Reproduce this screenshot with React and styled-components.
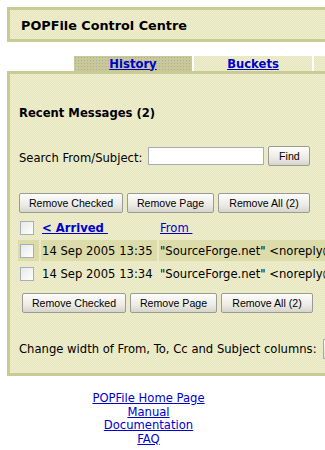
import React from 'react';
import styled, { createGlobalStyle } from 'styled-components';

const GlobalStyle = createGlobalStyle`
html, body {
  margin: 0;
  overflow: hidden;
  background: #ffffff;
}
body {
  padding: 7px;
  font-family: "DejaVu Sans", Verdana, sans-serif;
  font-size: 11.6px;
  color: #000;
}
`;

const paper = `
background-color: #eaeac6;
background-image: repeating-conic-gradient(#e6e6c0 0 25%, #eeeecd 0 50%);
background-size: 2px 2px;
`;

const Page = styled.div`
width: 640px;
`;

const Header = styled.div`
${paper}
border: 3px solid #c9cb95;
border-right: none;
height: 29px;
display: flex;
align-items: center;
padding-left: 11px;
`;

const Title = styled.h1`
margin: 0;
font-size: 12.8px;
font-weight: bold;
padding-top: 1px;
`;

const TabRow = styled.div`
display: flex;
gap: 2px;
margin-top: 14px;
padding-left: 67px;
height: 15px;
`;

const Tab = styled.div`
width: 118px;
height: 15px;
display: flex;
align-items: center;
justify-content: center;
${p => p.$active ? `
background-color: #c9c997;
background-image: radial-gradient(#a9a9b0 0.6px, transparent 0.9px);
background-size: 3px 3px;
` : paper}
a {
  color: #0000cc;
  font-weight: bold;
  font-size: 11.6px;
}
`;

const Panel = styled.div`
${paper}
border: 3px solid #c9cb95;
border-right: none;
height: 299px;
padding: 0 0 0 9px;
`;

const Heading = styled.h2`
margin: 0;
padding-top: 33px;
font-size: 11.6px;
font-weight: bold;
line-height: 13px;
`;

const SearchRow = styled.div`
display: flex;
align-items: center;
margin-top: 27px;
height: 18px;
`;

const SearchLabel = styled.span`
margin-right: 6px;
padding-top: 4px;
`;

const SearchInput = styled.input`
box-sizing: border-box;
width: 116px;
height: 18px;
border: 1px solid #a5acb2;
background: #fff;
margin: 0 4px 0 0;
padding: 0;
`;

const ButtonRow = styled.div`
display: flex;
gap: 4px;
margin-top: ${p => p.$top}px;
margin-left: ${p => p.$left || 0}px;
`;

const Btn = styled.button`
box-sizing: border-box;
height: 20px;
width: ${p => p.$w}px;
padding: 0;
font-family: "Liberation Sans", Tahoma, sans-serif;
font-size: 10.6px;
color: #000;
border: 1px solid #9b9b96;
border-radius: 2px;
background: linear-gradient(#fdfdfb, #ecebe6 60%, #d6d5cc);
`;

const Table = styled.div`
margin-top: 4px;
margin-left: -1px;
display: grid;
grid-template-columns: 21px 116px auto;
column-gap: 2px;
row-gap: 2px;
`;

const Cell = styled.div`
height: ${p => p.$h || 21}px;
display: flex;
align-items: center;
white-space: nowrap;
background: ${p => p.$shade ? '#dcdcab' : 'transparent'};
padding-left: ${p => p.$pad || 0}px;
a {
  color: #0000cc;
  font-weight: ${p => p.$bold ? 'bold' : 'normal'};
}
`;

const Check = styled.span`
display: inline-block;
box-sizing: border-box;
width: 14px;
height: 14px;
margin-left: 2px;
border: 1px solid #a7adbb;
background: linear-gradient(135deg, #e8e8e3, #fff);
`;

const WidthRow = styled.div`
display: flex;
align-items: center;
margin-top: 26px;
white-space: nowrap;
`;

const WidthBox = styled.span`
display: inline-block;
width: 20px;
height: 18px;
margin-left: 6px;
border: 1px solid #a5acb2;
background: linear-gradient(#fdfdfb, #d9d8d0);
`;

const Footer = styled.div`
width: 283px;
margin-top: 16px;
text-align: center;
line-height: 13.5px;
a {
  display: block;
  color: #0000cc;
  width: fit-content;
  margin: 0 auto;
}
`;

const rows = [
  { date: '14 Sep 2005 13:35', from: '"SourceForge.net" <noreply@sourceforge.net>', shade: true },
  { date: '14 Sep 2005 13:34', from: '"SourceForge.net" <noreply@sourceforge.net>', shade: false },
];

const Buttons = ({ top, left }) => (
  <ButtonRow $top={top} $left={left}>
    <Btn $w={104}>Remove Checked</Btn>
    <Btn $w={87}>Remove Page</Btn>
    <Btn $w={92}>Remove All (2)</Btn>
  </ButtonRow>
);

export default function App() {
  return (
    <Page>
      <GlobalStyle />
      <Header>
        <Title>POPFile Control Centre</Title>
      </Header>
      <TabRow>
        <Tab $active><a href="#history">History</a></Tab>
        <Tab><a href="#buckets">Buckets</a></Tab>
        <Tab><a href="#config">Configuration</a></Tab>
      </TabRow>
      <Panel>
        <Heading>Recent Messages (2)</Heading>
        <SearchRow>
          <SearchLabel>Search From/Subject:</SearchLabel>
          <SearchInput type="text" />
          <Btn $w={42}>Find</Btn>
        </SearchRow>
        <Buttons top={28} />
        <Table>
          <Cell $h={21}><Check /></Cell>
          <Cell $h={21} $pad={1} $bold><a href="#arrived">&lt; Arrived&nbsp;</a></Cell>
          <Cell $h={21} $pad={1}><a href="#from">From&nbsp;</a></Cell>
          {rows.map(r => (
            <React.Fragment key={r.date}>
              <Cell $shade={r.shade}><Check /></Cell>
              <Cell $shade={r.shade} $pad={1}>{r.date}</Cell>
              <Cell $shade={r.shade} $pad={1}>{r.from}</Cell>
            </React.Fragment>
          ))}
        </Table>
        <Buttons top={9} left={3} />
        <WidthRow>
          Change width of From, To, Cc and Subject columns:
          <WidthBox />
        </WidthRow>
      </Panel>
      <Footer>
        <a href="#home">POPFile Home Page</a>
        <a href="#manual">Manual</a>
        <a href="#docs">Documentation</a>
        <a href="#faq">FAQ</a>
      </Footer>
    </Page>
  );
}
